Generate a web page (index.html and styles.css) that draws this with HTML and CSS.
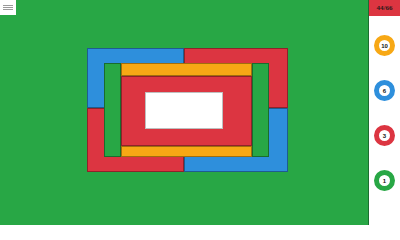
FILE: index.html
```html
<!DOCTYPE html>
<html>
<head>
<meta charset="utf-8">
<link rel="stylesheet" href="styles.css">
</head>
<body>
<div class="app">
  <main class="stage">
    <button class="menu" aria-label="menu"><span></span><span></span><span></span></button>
    <div class="board">
      <div class="piece blue tl"></div>
      <div class="piece red tr"></div>
      <div class="piece red bl"></div>
      <div class="piece blue br"></div>
      <div class="piece green gl"></div>
      <div class="piece green gr"></div>
      <div class="piece yellow yt"></div>
      <div class="piece yellow yb"></div>
      <div class="piece red center"></div>
      <div class="hole"></div>
    </div>
  </main>
  <aside class="side">
    <div class="level">44/66</div>
    <ul class="counts">
      <li><span class="ring c-yellow">10</span></li>
      <li><span class="ring c-blue">6</span></li>
      <li><span class="ring c-red">3</span></li>
      <li><span class="ring c-green">1</span></li>
    </ul>
  </aside>
</div>
</body>
</html>
```
FILE: styles.css
```css
html, body {
  margin: 0;
  padding: 0;
  width: 400px;
  height: 225px;
  overflow: hidden;
  font-family: "Liberation Sans", Arial, sans-serif;
}
.app {
  display: flex;
  width: 400px;
  height: 225px;
  background: #28a745;
}
.stage {
  position: relative;
  flex: 1;
  padding: 48px 0 0 87px;
}
.menu {
  position: absolute;
  left: 0;
  top: 0;
  width: 16px;
  height: 15px;
  padding: 5px 3px;
  margin: 0;
  border: none;
  background: #fff;
  display: flex;
  flex-direction: column;
  justify-content: space-between;
  box-sizing: border-box;
}
.menu span {
  display: block;
  height: 1px;
  width: 100%;
  background: #9a9a9a;
}
.board {
  display: grid;
  grid-template-columns: 17px 17px 24px 39px 39px 29px 17px 19px;
  grid-template-rows: 15px 13px 16px 16px 21px 17px 11px 15px;
  width: 201px;
}
.piece {
  box-sizing: border-box;
  border: 1px solid rgba(0, 0, 0, 0.35);
}
.blue { background: #2e8fdc; }
.red { background: #dc3541; }
.green { background: #28a745; }
.yellow { background: #f7a815; }
.tl { grid-column: 1 / 5; grid-row: 1 / 5; }
.tr { grid-column: 5 / 9; grid-row: 1 / 5; }
.bl { grid-column: 1 / 5; grid-row: 5 / 9; }
.br { grid-column: 5 / 9; grid-row: 5 / 9; }
.gl { grid-column: 2 / 3; grid-row: 2 / 8; }
.gr { grid-column: 7 / 8; grid-row: 2 / 8; }
.yt { grid-column: 3 / 7; grid-row: 2 / 3; }
.yb { grid-column: 3 / 7; grid-row: 7 / 8; }
.center { grid-column: 3 / 7; grid-row: 3 / 7; }
.hole {
  grid-column: 4 / 6;
  grid-row: 4 / 6;
  background: #fff;
  border: 1px solid rgba(0, 0, 0, 0.25);
  box-sizing: border-box;
}
.side {
  width: 31px;
  background: #fff;
  border-left: 1px solid #1b6e30;
  display: flex;
  flex-direction: column;
}
.level {
  height: 16px;
  background: #dc3541;
  color: #2a1a1a;
  font-family: "Liberation Serif", serif;
  font-weight: bold;
  font-size: 7px;
  display: flex;
  align-items: center;
  justify-content: center;
}
.counts {
  list-style: none;
  margin: 0;
  padding: 7px 0 0;
}
.counts li {
  height: 45px;
  display: flex;
  align-items: center;
  justify-content: center;
}
.ring {
  width: 21px;
  height: 21px;
  box-sizing: border-box;
  border-radius: 50%;
  border: 5px solid;
  background: #fff;
  display: flex;
  align-items: center;
  justify-content: center;
  font-size: 6px;
  font-weight: bold;
  color: #111;
  line-height: 1;
}
.c-yellow { border-color: #f7a815; }
.c-blue { border-color: #2e8fdc; }
.c-red { border-color: #dc3541; }
.c-green { border-color: #28a745; }
```
